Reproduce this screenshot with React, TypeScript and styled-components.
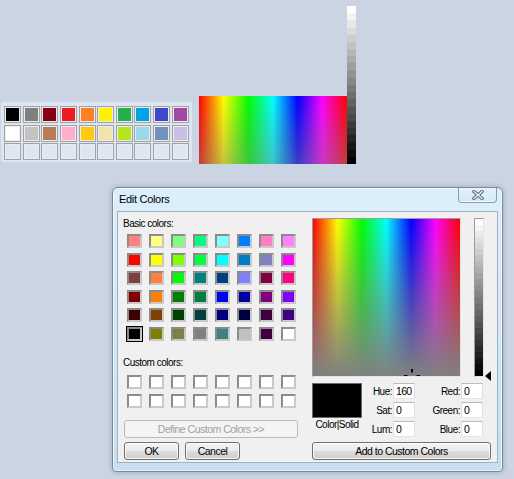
import styled, { createGlobalStyle } from "styled-components";

const GlobalStyle = createGlobalStyle`
  html, body {
    margin: 0;
    padding: 0;
    background: #cad4e2;
  }
  body {
    font-family: "Liberation Sans", Arial, sans-serif;
  }
`;

const HUES =
  "linear-gradient(to right, #ff0000 0%, #ffff00 16.7%, #00ff00 33.3%, #00ffff 50%, #0000ff 66.7%, #ff00ff 83.3%, #ff0000 100%)";

// hard-stepped white -> black ramp, like the GDI luminance bars
function steppedGray(steps: number) {
  const stops: string[] = [];
  for (let i = 0; i < steps; i++) {
    const v = Math.round(255 - (255 * i) / (steps - 1));
    const a = ((i / steps) * 100).toFixed(2);
    const b = (((i + 1) / steps) * 100).toFixed(2);
    stops.push(`rgb(${v},${v},${v}) ${a}%`, `rgb(${v},${v},${v}) ${b}%`);
  }
  return `linear-gradient(to bottom, ${stops.join(", ")})`;
}

const PAINT_COLORS = [
  "#000000", "#7f7f7f", "#880015", "#ed1c24", "#ff7f27", "#fff200", "#22b14c", "#00a2e8", "#3f48cc", "#a349a4",
  "#ffffff", "#c3c3c3", "#b97a57", "#ffaec9", "#ffc90e", "#efe4b0", "#b5e61d", "#99d9ea", "#7092be", "#c8bfe7",
  null, null, null, null, null, null, null, null, null, null,
];

const BASIC_COLORS = [
  "#ff8080", "#ffff80", "#80ff80", "#00ff80", "#80ffff", "#0080ff", "#ff80c0", "#ff80ff",
  "#ff0000", "#ffff00", "#80ff00", "#00ff40", "#00ffff", "#0080c0", "#8080c0", "#ff00ff",
  "#804040", "#ff8040", "#00ff00", "#008080", "#004080", "#8080ff", "#800040", "#ff0080",
  "#800000", "#ff8000", "#008000", "#008040", "#0000ff", "#0000a0", "#800080", "#8000ff",
  "#400000", "#804000", "#004000", "#004040", "#000080", "#000040", "#400040", "#400080",
  "#000000", "#808000", "#808040", "#808080", "#408080", "#c0c0c0", "#400040", "#ffffff",
];

const SELECTED_BASIC = 40;

const Desktop = styled.div`
  position: relative;
  width: 514px;
  height: 479px;
  overflow: hidden;
`;

/* ---------- top strip: paint palette + spectrum preview ---------- */

const TopRow = styled.div`
  display: flex;
  align-items: flex-end;
  padding-top: 6px;
  height: 158px;
`;

const PalettePanel = styled.div`
  box-sizing: border-box;
  width: 191px;
  height: 60px;
  margin: 0 0 2px 1px;
  padding: 4px 0 0 3px;
  background: #dce5f1;
`;

const PaletteGrid = styled.div`
  display: grid;
  grid-template-columns: repeat(10, 17px);
  grid-auto-rows: 17px;
  column-gap: 1.65px;
  row-gap: 1.5px;
`;

const PaletteCell = styled.div<{ $color: string | null }>`
  box-sizing: border-box;
  border: 1px solid #a2a2a2;
  box-shadow: inset 0 0 0 1px ${(p) => (p.$color ? "#ececec" : "#e6ecf5")};
  background: ${(p) => p.$color ?? "#dde6f3"};
`;

const SpectrumStrip = styled.div`
  width: 148px;
  height: 68px;
  margin-left: 7px;
  background: linear-gradient(to bottom, rgba(128, 128, 128, 0), rgba(128, 128, 128, 0.45)), ${HUES};
`;

const GrayStrip = styled.div`
  width: 9px;
  height: 158px;
  background: ${steppedGray(22)};
`;

/* ---------- Edit Colors window ---------- */

const Window = styled.div`
  box-sizing: border-box;
  display: flex;
  flex-direction: column;
  width: 391px;
  height: 285px;
  margin: 23px 0 0 112px;
  padding: 0 4px 8px;
  border: 1px solid #7b8a99;
  border-radius: 6px 6px 4px 4px;
  background: linear-gradient(to bottom, #dbeffb, #cfe6f5 60%, #c6e0f1);
  box-shadow: 0 0 5px rgba(40, 60, 80, 0.3), inset 0 0 0 1px rgba(255, 255, 255, 0.6);
`;

const TitleBar = styled.div`
  display: flex;
  justify-content: space-between;
  align-items: flex-start;
  height: 23px;
`;

const TitleText = styled.div`
  padding: 5px 0 0 2px;
  font-size: 11px;
  line-height: 13px;
  letter-spacing: -0.3px;
  color: #000;
`;

const CloseButton = styled.div`
  box-sizing: border-box;
  display: flex;
  align-items: center;
  justify-content: center;
  width: 39px;
  height: 15px;
  margin-right: 1px;
  border: 1px solid #8d9cab;
  border-top: none;
  border-radius: 0 0 4px 4px;
  background: linear-gradient(to bottom, #e4f2fb, #d3e8f6);
  box-shadow: inset 0 -1px 0 rgba(255, 255, 255, 0.7);
`;

const Client = styled.div`
  flex: 1;
  display: flex;
  padding: 6px 6px 0 5px;
  background: #f0f0f0;
  border: 1px solid #9fb1c2;
`;

const LeftPane = styled.div`
  display: flex;
  flex-direction: column;
  width: 175px;
`;

const Caption = styled.div<{ $top?: number }>`
  margin-top: ${(p) => p.$top ?? 0}px;
  font-size: 10px;
  line-height: 12px;
  letter-spacing: -0.5px;
  color: #000;
`;

const SwatchGrid = styled.div<{ $top: number }>`
  display: grid;
  grid-template-columns: repeat(8, 15px);
  grid-auto-rows: 14px;
  column-gap: 7px;
  row-gap: 4.5px;
  margin: ${(p) => p.$top}px 0 0 4px;
`;

const Swatch = styled.div<{ $color: string; $selected?: boolean }>`
  box-sizing: border-box;
  border: 2px solid;
  border-color: #8b8b8b #c9c9c9 #c9c9c9 #8b8b8b;
  background: ${(p) => p.$color};
  outline: ${(p) => (p.$selected ? "1px solid #000" : "none")};
`;

const WinButton = styled.button`
  box-sizing: border-box;
  height: 17.5px;
  padding: 0;
  border: 1px solid #707070;
  border-radius: 3px;
  background: linear-gradient(to bottom, #f3f3f3 0%, #ebebeb 48%, #dcdcdc 52%, #cfcfcf 100%);
  box-shadow: inset 0 0 0 1px rgba(255, 255, 255, 0.75);
  font-family: "Liberation Sans", Arial, sans-serif;
  font-size: 10.5px;
  letter-spacing: -0.5px;
  color: #000;

  &:disabled {
    border-color: #b7bbbe;
    background: #f4f4f4;
    box-shadow: none;
    color: #a0a0a0;
  }
`;

const DefineButton = styled(WinButton)`
  width: 174px;
  margin: 12.5px 0 0 1px;
`;

const ButtonRow = styled.div`
  display: flex;
  gap: 6px;
  margin: 4.5px 0 0 1px;
`;

const SmallButton = styled(WinButton)`
  width: 55px;
`;

const RightPane = styled.div`
  display: flex;
  flex-direction: column;
  width: 179px;
  margin-left: 14px;
`;

const PickerRow = styled.div`
  position: relative;
  display: flex;
  height: 159px;
`;

const Spectrum = styled.div`
  position: relative;
  box-sizing: border-box;
  width: 149px;
  height: 159px;
  border: 1px solid;
  border-color: #9c9c9c #e4e4e4 #e4e4e4 #9c9c9c;
  background: linear-gradient(to bottom, rgba(128, 128, 128, 0), #808080), ${HUES};
  overflow: hidden;
`;

const Crosshair = styled.svg`
  position: absolute;
  left: 91px;
  top: 150px;
`;

const LumBar = styled.div`
  box-sizing: border-box;
  width: 9.5px;
  height: 159px;
  margin-left: 13px;
  border: 1px solid;
  border-color: #9c9c9c #e4e4e4 #e4e4e4 #9c9c9c;
  background: ${steppedGray(26)};
`;

const LumArrow = styled.div`
  position: absolute;
  left: 173px;
  top: 153px;
  width: 0;
  height: 0;
  border-top: 5px solid transparent;
  border-bottom: 5px solid transparent;
  border-right: 6px solid #000;
`;

const InfoGrid = styled.div`
  display: grid;
  grid-template-columns: 50px 31px 22px 46px 22px;
  grid-template-rows: repeat(3, 16px);
  row-gap: 3px;
  margin-top: 6px;
`;

const Preview = styled.div`
  grid-column: 1;
  grid-row: 1 / span 2;
  background: #000;
  border: 1px solid #6b6b6b;
`;

const PreviewLabel = styled.div`
  margin-top: -2px;
  text-align: center;
  font-size: 10px;
  line-height: 12px;
  letter-spacing: -0.5px;
`;

const FieldLabel = styled.div`
  display: flex;
  align-items: center;
  justify-content: flex-end;
  padding-right: 1px;
  font-size: 10px;
  letter-spacing: -0.5px;
  color: #000;
`;

const Field = styled.input`
  box-sizing: border-box;
  width: 22px;
  height: 16px;
  margin: 0;
  padding: 0 0 0 2px;
  border: 1px solid;
  border-color: #b9bdc2 #dde1e6 #e4e7ea #dde1e6;
  background: #fff;
  outline: none;
  font-family: "Liberation Sans", Arial, sans-serif;
  font-size: 10.5px;
  letter-spacing: -0.7px;
  color: #000;
`;

const AddButton = styled(WinButton)`
  width: 179px;
  margin-top: 5px;
`;

function CloseGlyph() {
  return (
    <svg width="12" height="10" viewBox="0 0 12 10">
      <path d="M2 1.5 L10 8.5 M10 1.5 L2 8.5" stroke="#5f6d7b" strokeWidth="3.4" strokeLinecap="square" fill="none" />
      <path d="M2 1.5 L10 8.5 M10 1.5 L2 8.5" stroke="#eef3f8" strokeWidth="1.3" strokeLinecap="square" fill="none" />
    </svg>
  );
}

export default function App() {
  return (
    <>
      <GlobalStyle />
      <Desktop>
        <TopRow>
          <PalettePanel>
            <PaletteGrid>
              {PAINT_COLORS.map((c, i) => (
                <PaletteCell key={i} $color={c} />
              ))}
            </PaletteGrid>
          </PalettePanel>
          <SpectrumStrip />
          <GrayStrip />
        </TopRow>

        <Window>
          <TitleBar>
            <TitleText>Edit Colors</TitleText>
            <CloseButton aria-label="Close">
              <CloseGlyph />
            </CloseButton>
          </TitleBar>
          <Client>
            <LeftPane>
              <Caption>Basic colors:</Caption>
              <SwatchGrid $top={4}>
                {BASIC_COLORS.map((c, i) => (
                  <Swatch key={i} $color={c} $selected={i === SELECTED_BASIC} />
                ))}
              </SwatchGrid>
              <Caption $top={16.5}>Custom colors:</Caption>
              <SwatchGrid $top={6}>
                {Array.from({ length: 16 }, (_, i) => (
                  <Swatch key={i} $color="#ffffff" />
                ))}
              </SwatchGrid>
              <DefineButton disabled>Define Custom Colors &gt;&gt;</DefineButton>
              <ButtonRow>
                <SmallButton>OK</SmallButton>
                <SmallButton>Cancel</SmallButton>
              </ButtonRow>
            </LeftPane>

            <RightPane>
              <PickerRow>
                <Spectrum>
                  <Crosshair width="16" height="8" viewBox="0 0 16 8">
                    <rect x="7" y="0" width="2" height="3.5" fill="#000" />
                    <rect x="0" y="6" width="3.5" height="1.2" fill="#000" />
                    <rect x="12.5" y="6" width="3.5" height="1.2" fill="#000" />
                  </Crosshair>
                </Spectrum>
                <LumBar />
                <LumArrow />
              </PickerRow>
              <InfoGrid>
                <Preview />
                <FieldLabel>Hue:</FieldLabel>
                <Field readOnly value="160" />
                <FieldLabel>Red:</FieldLabel>
                <Field readOnly value="0" />
                <FieldLabel>Sat:</FieldLabel>
                <Field readOnly value="0" />
                <FieldLabel>Green:</FieldLabel>
                <Field readOnly value="0" />
                <PreviewLabel>Color|Solid</PreviewLabel>
                <FieldLabel>Lum:</FieldLabel>
                <Field readOnly value="0" />
                <FieldLabel>Blue:</FieldLabel>
                <Field readOnly value="0" />
              </InfoGrid>
              <AddButton>Add to Custom Colors</AddButton>
            </RightPane>
          </Client>
        </Window>
      </Desktop>
    </>
  );
}
